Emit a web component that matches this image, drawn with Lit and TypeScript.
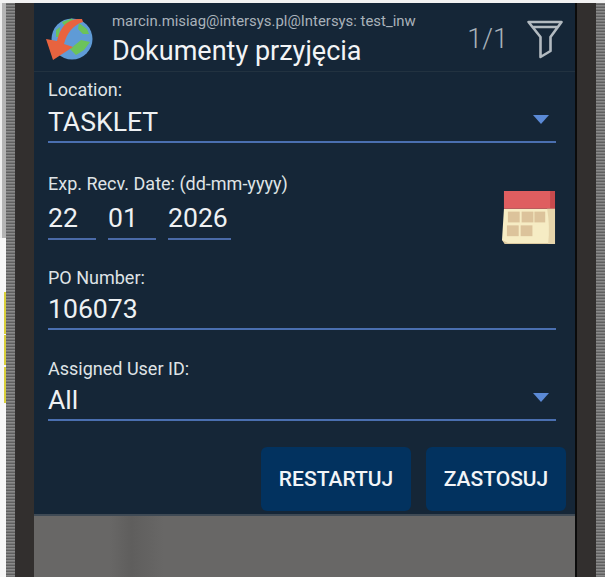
import { LitElement, html, css, svg } from "lit";
import { customElement } from "lit/decorators.js";

@customElement("app-root")
export class AppRoot extends LitElement {
  static styles = css`
    :host { display: block; width: 605px; height: 577px; overflow: hidden; background: #f2f2f2; font-family: Roboto, "Liberation Sans", sans-serif; }
    .frame { display: flex; height: 574px; margin-top: 3px; position: relative; }
    .edgeL { width: 6px; background: linear-gradient(90deg, #eeeeee 0 2px, #b4b4b4 2px) 0 0 / 100% 235px no-repeat, #f7f7f7; }
    .noiseL { width: 9px; background: repeating-linear-gradient(180deg, #777 0 1px, #5f5f5f 1px 2px, #8a8a8a 2px 3px); }
    .bezelL { width: 19px; background: #322f2e; }
    .screen { width: 541px; display: flex; flex-direction: column; background: #152637; }
    .blackR { width: 2px; background: #0b0b0b; }
    .bezelR { width: 19px; background: #322f2e; }
    .noiseR { flex: 1; background: repeating-linear-gradient(180deg, #777 0 1px, #5f5f5f 1px 2px, #8a8a8a 2px 3px); }
    .mark { position: absolute; left: 4px; width: 2px; background: #d9cf3a; }
    .header { height: 69px; box-sizing: border-box; display: flex; align-items: flex-start; border-bottom: 1px solid #223240; padding-left: 11px; flex: none; }
    .logo { width: 50px; height: 46px; margin-top: 14px; flex: none; }
    .titles { margin-left: 17px; flex: 1; }
    .user { font-size: 14.9px; line-height: 17px; color: #a9b2ba; margin-top: 10px; white-space: nowrap; }
    .title { font-size: 27px; line-height: 32px; color: #f2f4f6; margin-top: 5px; white-space: nowrap; }
    .count { font-size: 27px; line-height: 32px; color: #a9b2ba; font-weight: 300; margin-top: 20px; }
    .funnel { width: 38px; height: 40px; margin: 17px 11px 0 18px; flex: none; }
    .body { padding: 0 19px 0 14px; flex: none; }
    .field { position: relative; }
    .label { font-size: 18px; line-height: 19px; color: #dfe3e6; }
    .value { font-size: 26.6px; line-height: 32px; color: #eef1f3; display: flex; justify-content: space-between; align-items: center; height: 32px; white-space: nowrap; }
    .line { height: 2px; background: #4a6fb0; }
    .line-3 { margin-top: 3px; }
    .arrow { width: 16px; height: 9px; margin: 0 7px 5px 0; flex: none; }
    .loc { margin-top: 8px; }
    .loc .value { margin-top: 7px; }
    .date { margin-top: 31px; display: flex; justify-content: space-between; align-items: flex-start; }
    .parts { display: flex; gap: 12px; margin-top: 9px; }
    .part { width: 48px; }
    .part.wide { width: 63px; }
    .part .line { height: 2px; margin-top: 4px; background: #4a6aa8; }
    .cal { width: 54px; height: 54px; margin-top: 17px; flex: none; }
    .po { margin-top: 23px; }
    .po .value { margin-top: 5px; height: 33px; }
    .user-id { margin-top: 29px; }
    .user-id .value { margin-top: 6px; }
    .buttons { display: flex; justify-content: flex-end; gap: 15px; margin: 26px -10px 0 0; }
    .btn { height: 64px; border-radius: 6px; background: #02325f; color: #f2f5f8; font-size: 21px; font-weight: 500; display: flex; align-items: center; justify-content: center; width: 140px; }
    .btn.restart { width: 150px; }
    .footer { margin-top: 3px; flex: 1; border-top: 2px solid #3f4a55; background: linear-gradient(90deg, #686766 0 14%, #5f5e5d 18%, #686766 24%); }
    .m1 { top: 289px; height: 42px; }
    .m2 { top: 332px; height: 30px; }
    .m3 { top: 364px; height: 36px; }
  `;

  render() {
    return html`<div class="frame">
      <div class="edgeL"></div><div class="noiseL"></div><div class="bezelL"></div>
      <div class="mark m1"></div>
      <div class="mark m2"></div>
      <div class="mark m3"></div>
      <div class="screen">
        <div class="header">
          <svg class="logo" viewBox="0 0 50 46">
            <circle cx="27" cy="22" r="20.5" fill="#5f9bd6"/>
            <path d="M17 5 L27 1.500 L30 6 L20 10 Z M34 6 L42 12 L44 17 L38 17 L33 12 Z M25 32 L36 23 L45 25 L39 33 L31 38 Z M11 13 L15 10 L14 20 L11 20 Z" fill="#6cc35a"/>
            <path d="M37 2 C26 1 16 6 12 24 L1 22 L8 43 L28 30 L19 27 C22 16 28 8 38 5 Z" fill="#e8633f"/>
          </svg>
          <div class="titles">
            <div class="user">marcin.misiag@intersys.pl@Intersys: test_inw</div>
            <div class="title">Dokumenty przyjęcia</div>
          </div>
          <div class="count">1/1</div>
          <svg class="funnel" viewBox="0 0 38 40">
            <path d="M2.500 2 H35.500 L24.500 17 V31 L14.500 37 V17 Z M7 7 H31" fill="none" stroke="#b2bac0" stroke-width="2.600" stroke-linejoin="round"/>
          </svg>
        </div>
        <div class="body">
          <div class="field loc">
            <div class="label">Location:</div>
            <div class="value">TASKLET ${this.arrow()}</div>
            <div class="line line-3"></div>
          </div>
          <div class="date">
            <div>
              <div class="label">Exp. Recv. Date: (dd-mm-yyyy)</div>
              <div class="parts">
                <div class="part"><div class="value">22</div><div class="line"></div></div>
                <div class="part"><div class="value">01</div><div class="line"></div></div>
                <div class="part wide"><div class="value">2026</div><div class="line"></div></div>
              </div>
            </div>
            <svg class="cal" viewBox="0 0 55 55">
              <path d="M2 18 H54 V54 H3 L0 50 Z" fill="#f6ecc4"/>
              <path d="M2 0 H54 V18 H2 Z" fill="#df5e60"/>
              <path d="M49 0 H54 V18 H49 Z" fill="#c74a4d"/>
              <path d="M46 18 H54 V54 H47 Q49 36 46 18 Z" fill="#e6d5ab"/>
              <path d="M0 50 L6 53 H47 V54 H3 Z" fill="#dcc9a0"/>
              <g fill="#dcc39b">
                <rect x="6" y="21" width="12" height="11"/><rect x="20" y="21" width="12" height="11"/><rect x="33" y="21" width="11" height="11"/>
                <rect x="5" y="35" width="12" height="11"/><rect x="19" y="35" width="12" height="11"/>
              </g>
            </svg>
          </div>
          <div class="field po">
            <div class="label">PO Number:</div>
            <div class="value">106073</div>
            <div class="line line-3"></div>
          </div>
          <div class="field user-id">
            <div class="label">Assigned User ID:</div>
            <div class="value">All ${this.arrow()}</div>
            <div class="line line-3"></div>
          </div>
          <div class="buttons">
            <div class="btn restart">RESTARTUJ</div>
            <div class="btn">ZASTOSUJ</div>
          </div>
        </div>
        <div class="footer"></div>
      </div>
      <div class="blackR"></div><div class="bezelR"></div><div class="noiseR"></div>
    </div>`;
  }

  arrow() {
    return html`<svg class="arrow" viewBox="0 0 16 9">${svg`<path d="M0 0 H16 L8 9 Z" fill="#5b8ad6"/>`}</svg>`;
  }
}
